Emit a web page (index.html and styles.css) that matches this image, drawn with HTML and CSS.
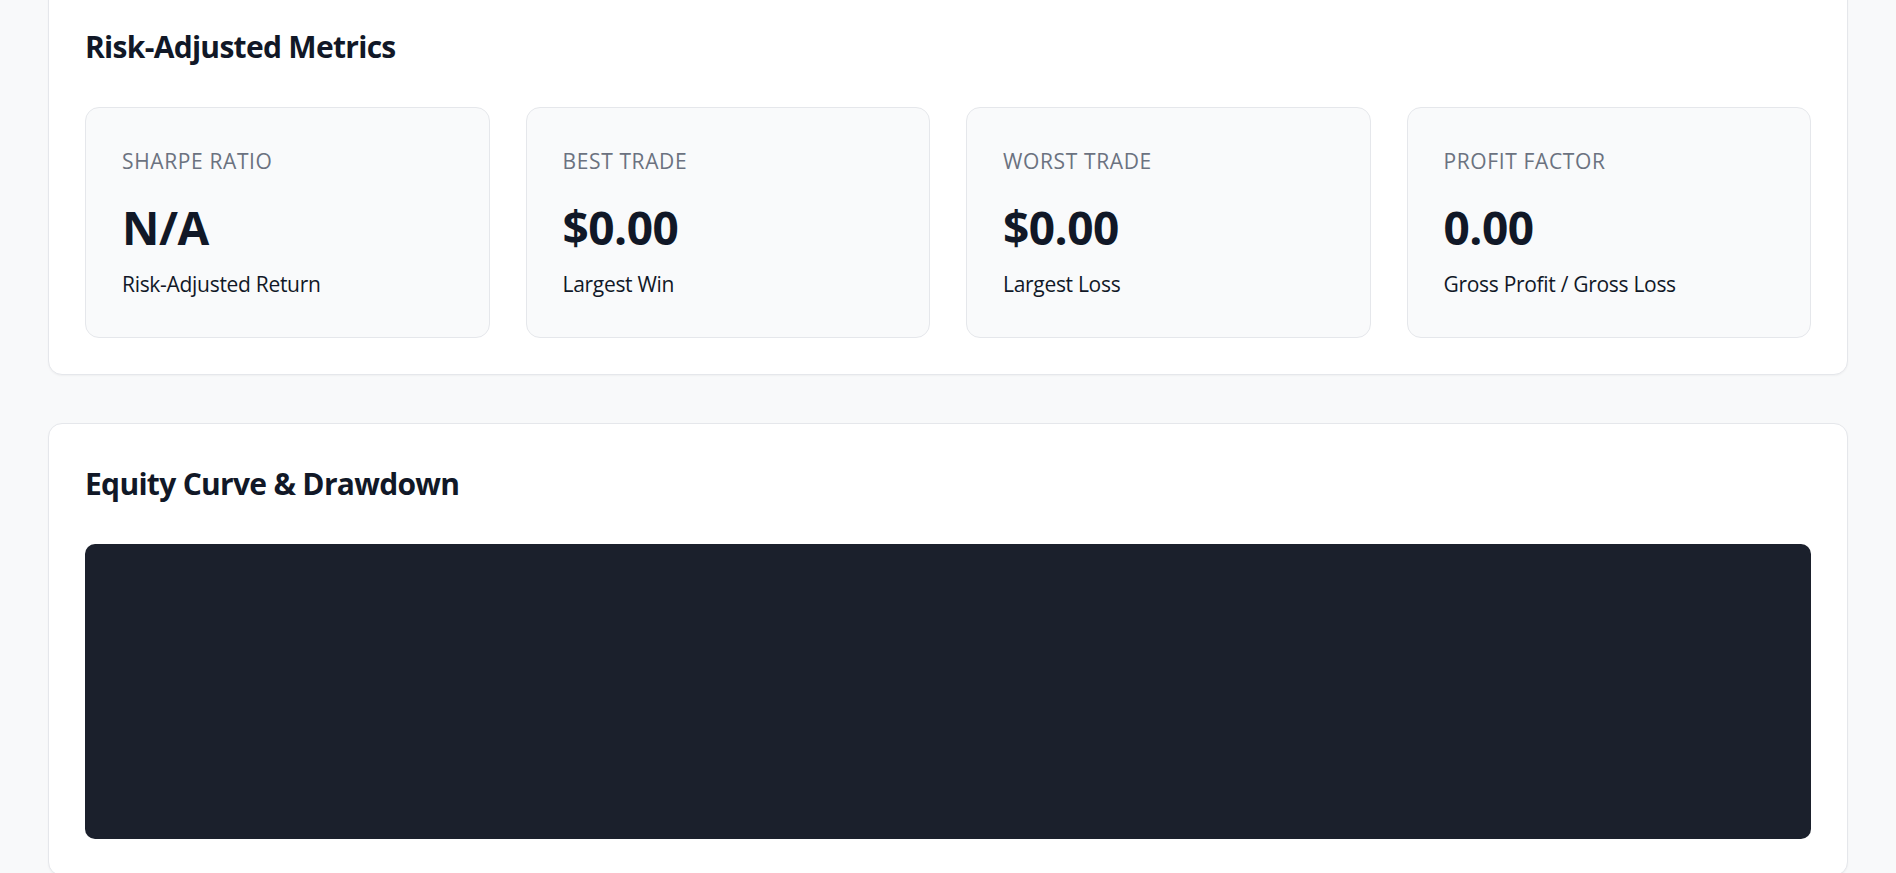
FILE: index.html
```html
<!DOCTYPE html>
<html lang="en">
<head>
<meta charset="utf-8">
<title>Risk-Adjusted Metrics</title>
<link rel="stylesheet" href="styles.css">
</head>
<body>
<main class="page">
  <section class="panel">
    <h2 class="panel-title">Risk-Adjusted Metrics</h2>
    <div class="metrics">
      <div class="metric">
        <div class="metric-label">Sharpe Ratio</div>
        <div class="metric-value">N/A</div>
        <div class="metric-sub">Risk-Adjusted Return</div>
      </div>
      <div class="metric">
        <div class="metric-label">Best Trade</div>
        <div class="metric-value">$0.00</div>
        <div class="metric-sub">Largest Win</div>
      </div>
      <div class="metric">
        <div class="metric-label">Worst Trade</div>
        <div class="metric-value">$0.00</div>
        <div class="metric-sub">Largest Loss</div>
      </div>
      <div class="metric">
        <div class="metric-label">Profit Factor</div>
        <div class="metric-value">0.00</div>
        <div class="metric-sub">Gross Profit / Gross Loss</div>
      </div>
    </div>
  </section>
  <section class="panel">
    <h2 class="panel-title">Equity Curve &amp; Drawdown</h2>
    <div class="chart"></div>
  </section>
</main>
</body>
</html>
```
FILE: styles.css
```css
html, body {
  margin: 0;
  padding: 0;
}
body {
  background: #f8f9fa;
  font-family: "Open Sans", "Noto Sans", "Liberation Sans", sans-serif;
  color: #111827;
  overflow: hidden;
}
.page {
  padding: 0 48px;
  margin-top: -14px;
  display: flex;
  flex-direction: column;
  gap: 48px;
}
.panel {
  background: #ffffff;
  border: 1px solid #e5e7eb;
  border-radius: 14px;
  padding: 36px;
  box-shadow: 0 1px 2px rgba(0, 0, 0, 0.04);
}
.panel-title {
  margin: 0 0 36px 0;
  font-size: 30px;
  line-height: 48px;
  font-weight: 700;
  letter-spacing: -0.7px;
  color: #111827;
}
.metrics {
  display: grid;
  grid-template-columns: repeat(4, 1fr);
  gap: 36px;
}
.metric {
  background: #f9fafb;
  border: 1px solid #e5e7eb;
  border-radius: 14px;
  padding: 36px 36px 36px;
}
.metric-label {
  font-size: 21px;
  line-height: 34px;
  color: #6b7280;
  text-transform: uppercase;
  letter-spacing: 0.03em;
}
.metric-value {
  margin-top: 25.3px;
  font-size: 46px;
  line-height: 48px;
  font-weight: 700;
  letter-spacing: -0.5px;
  color: #111827;
}
.metric-sub {
  margin-top: 18px;
  font-size: 21px;
  line-height: 31.5px;
  font-weight: 500;
  letter-spacing: -0.3px;
  color: #111827;
}
.chart {
  height: 295px;
  background: #1b202c;
  border-radius: 10px;
}
```
